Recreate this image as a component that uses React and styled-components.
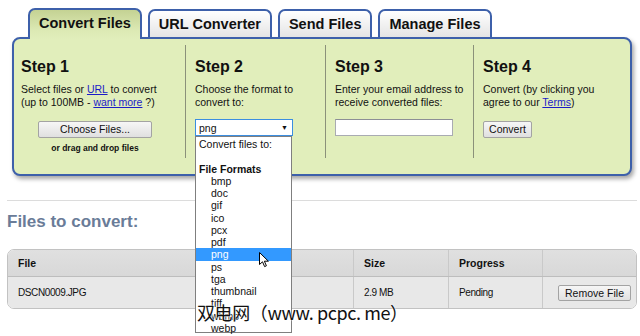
import React from 'react';
import styled, { createGlobalStyle, css } from 'styled-components';

const GlobalStyle = createGlobalStyle`
  html, body { margin: 0; padding: 0; background: #fff; }
  body { font-family: "Liberation Sans", Arial, sans-serif; color: #111; }
`;

const Page = styled.div`
  position: relative;
  width: 640px;
  height: 336px;
  overflow: hidden;
  padding: 8px 3px 0 7px;
  box-sizing: border-box;
`;

const Tabs = styled.div`
  position: relative;
  z-index: 1;
  display: flex;
  align-items: flex-end;
  gap: 6px;
  height: 29px;
  padding-left: 21px;
`;

const Tab = styled.div`
  height: 28px;
  box-sizing: border-box;
  padding: 0 9px;
  border: 2px solid #3d60aa;
  border-bottom: none;
  border-radius: 7px 7px 0 0;
  background: linear-gradient(#ffffff, #e4e4e4);
  font-size: 14.5px;
  font-weight: bold;
  line-height: 26px;
  white-space: nowrap;
  ${(p) =>
    p.$active &&
    css`
      height: 31px;
      margin-bottom: -2px;
      padding: 0 9px;
      background: linear-gradient(#c4d293, #dce9b4 70%, #e1eebb);
    `}
`;

const Panel = styled.div`
  display: grid;
  grid-template-columns: 171px 140px 148px 1fr;
  height: 139px;
  box-sizing: border-box;
  margin: 0 5px;
  padding: 6px 0 16px;
  border: 2px solid #3d60aa;
  border-radius: 8px;
  background: #e1eebb;
  box-shadow: 2px 3px 4px rgba(0, 0, 0, 0.35);
`;

const Step = styled.div`
  position: relative;
  padding: 13px 9px 0;
  ${(p) =>
    p.$first
      ? css`
          padding: 13px 16px 0 7px;
        `
      : css`
          border-left: 1px solid #8b917a;
        `}
`;

const StepTitle = styled.div`
  font-size: 16px;
  font-weight: bold;
  line-height: 18px;
  margin-bottom: 7px;
`;

const StepText = styled.div`
  font-size: 10.5px;
  line-height: 13px;
  white-space: nowrap;
  margin-bottom: 10px;
`;

const Link = styled.a`
  color: #1c1cc8;
  text-decoration: underline;
`;

const Center = styled.div`
  text-align: center;
`;

const Button = styled.button`
  display: inline-block;
  width: ${(p) => p.$w}px;
  height: ${(p) => p.$h || 17}px;
  padding: 0;
  border: 1px solid #a3a3a3;
  border-radius: 2px;
  background: linear-gradient(#f6f6f6, #e0e0e0);
  font-family: "Liberation Sans", Arial, sans-serif;
  font-size: 10.5px;
  color: #111;
  line-height: 14px;
`;

const DropNote = styled.div`
  margin-top: 5px;
  font-size: 8.5px;
  font-weight: bold;
  line-height: 11px;
`;

const SelectWrap = styled.div`
  position: relative;
  width: 98px;
`;

const SelectBox = styled.div`
  display: flex;
  justify-content: space-between;
  align-items: center;
  height: 17px;
  box-sizing: border-box;
  padding: 0 4px 0 3px;
  border: 1px solid #3b8ee0;
  background: #fff;
  font-size: 10.5px;
`;

const Caret = styled.span`
  font-size: 7px;
  line-height: 1;
`;

const DropList = styled.div`
  position: absolute;
  left: 0;
  top: 17px;
  width: 97px;
  height: 197px;
  box-sizing: border-box;
  padding-top: 1px;
  border: 1px solid #7f7f7f;
  background: #fff;
  z-index: 2;
`;

const Option = styled.div`
  height: 12.25px;
  line-height: 12.25px;
  font-size: 10.5px;
  padding-left: ${(p) => (p.$indent ? 15 : 3)}px;
  font-weight: ${(p) => (p.$group ? 'bold' : 'normal')};
  white-space: nowrap;
  ${(p) =>
    p.$selected &&
    css`
      background: #3399ff;
      color: #fff;
    `}
`;

const Cursor = styled.svg`
  position: absolute;
  left: 63px;
  top: 115px;
`;

const TextInput = styled.div`
  width: 118px;
  height: 17px;
  box-sizing: border-box;
  border: 1px solid #a9abb2;
  border-top-color: #8d8f96;
  background: #fff;
`;

const Rule = styled.div`
  height: 1px;
  margin-top: 24px;
  background: #dcdcdc;
`;

const SectionTitle = styled.div`
  margin-top: 11px;
  font-size: 17px;
  font-weight: bold;
  line-height: 20px;
  color: #6a7c98;
`;

const Table = styled.div`
  margin-top: 17px;
  border: 1px solid #c2c2c2;
  border-radius: 7px;
  overflow: hidden;
`;

const Row = styled.div`
  display: grid;
  grid-template-columns: 345px 95px 94px 1fr;
  height: ${(p) => (p.$head ? 26 : 31)}px;
  background: ${(p) => (p.$head ? 'linear-gradient(#e0e0e0, #d8d8d8)' : '#e8e8e8')};
  border-bottom: ${(p) => (p.$head ? '1px solid #bdbdbd' : 'none')};
  font-size: ${(p) => (p.$head ? '10.5px' : '10px')};
  font-weight: ${(p) => (p.$head ? 'bold' : 'normal')};
`;

const Cell = styled.div`
  display: flex;
  align-items: center;
  padding-left: 10px;
  justify-content: ${(p) => (p.$center ? 'center' : 'flex-start')};
  ${(p) =>
    !p.$first &&
    css`
      border-left: 1px solid #c9c9c9;
    `}
  ${(p) =>
    p.$tight &&
    css`
      letter-spacing: -0.4px;
    `}
`;

const Watermark = styled.div`
  position: absolute;
  left: 197px;
  top: 303px;
  z-index: 5;
  font-family: "Noto Sans CJK SC", "Liberation Sans", sans-serif;
  font-size: 18px;
  line-height: 18px;
  letter-spacing: -0.4px;
  color: #111;
  white-space: nowrap;
  text-shadow: 0 0 2px #fff, 0 0 1px #fff;
`;

const formats = ['bmp', 'doc', 'gif', 'ico', 'pcx', 'pdf', 'png', 'ps', 'tga', 'thumbnail', 'tiff', 'wbmp', 'webp'];

export default function App() {
  return (
    <>
      <GlobalStyle />
      <Page>
        <Tabs>
          <Tab $active>Convert Files</Tab>
          <Tab>URL Converter</Tab>
          <Tab>Send Files</Tab>
          <Tab>Manage Files</Tab>
        </Tabs>
        <Panel>
          <Step $first>
            <StepTitle>Step 1</StepTitle>
            <StepText>
              Select files or <Link>URL</Link> to convert
              <br />
              (up to 100MB - <Link>want more</Link> ?)
            </StepText>
            <Center>
              <Button $w={114}>Choose Files...</Button>
              <DropNote>or drag and drop files</DropNote>
            </Center>
          </Step>
          <Step>
            <StepTitle>Step 2</StepTitle>
            <StepText>
              Choose the format to
              <br />
              convert to:
            </StepText>
            <SelectWrap>
              <SelectBox>
                png <Caret>▼</Caret>
              </SelectBox>
              <DropList>
                <Option>Convert files to:</Option>
                <Option>&nbsp;</Option>
                <Option $group>File Formats</Option>
                {formats.map((f) => (
                  <Option key={f} $indent $selected={f === 'png'}>
                    {f}
                  </Option>
                ))}
                <Cursor width="11" height="16" viewBox="0 0 11 16">
                  <path d="M0.5 0.5 L0.5 12.5 L3.5 9.8 L5.6 14.6 L7.4 13.8 L5.4 9.2 L9.4 9.2 Z" fill="#fff" stroke="#000" strokeWidth="1" strokeLinejoin="round" />
                </Cursor>
              </DropList>
            </SelectWrap>
          </Step>
          <Step>
            <StepTitle>Step 3</StepTitle>
            <StepText>
              Enter your email address to
              <br />
              receive converted files:
            </StepText>
            <TextInput />
          </Step>
          <Step>
            <StepTitle>Step 4</StepTitle>
            <StepText>
              Convert (by clicking you
              <br />
              agree to our <Link>Terms</Link>)
            </StepText>
            <Button $w={49}>Convert</Button>
          </Step>
        </Panel>
        <Rule />
        <SectionTitle>Files to convert:</SectionTitle>
        <Table>
          <Row $head>
            <Cell $first>File</Cell>
            <Cell>Size</Cell>
            <Cell>Progress</Cell>
            <Cell />
          </Row>
          <Row>
            <Cell $first $tight>DSCN0009.JPG</Cell>
            <Cell $tight>2.9 MB</Cell>
            <Cell $tight>Pending</Cell>
            <Cell $center>
              <Button $w={73} $h={16}>Remove File</Button>
            </Cell>
          </Row>
        </Table>
        <Watermark>双电网（www. pcpc. me）</Watermark>
      </Page>
    </>
  );
}
